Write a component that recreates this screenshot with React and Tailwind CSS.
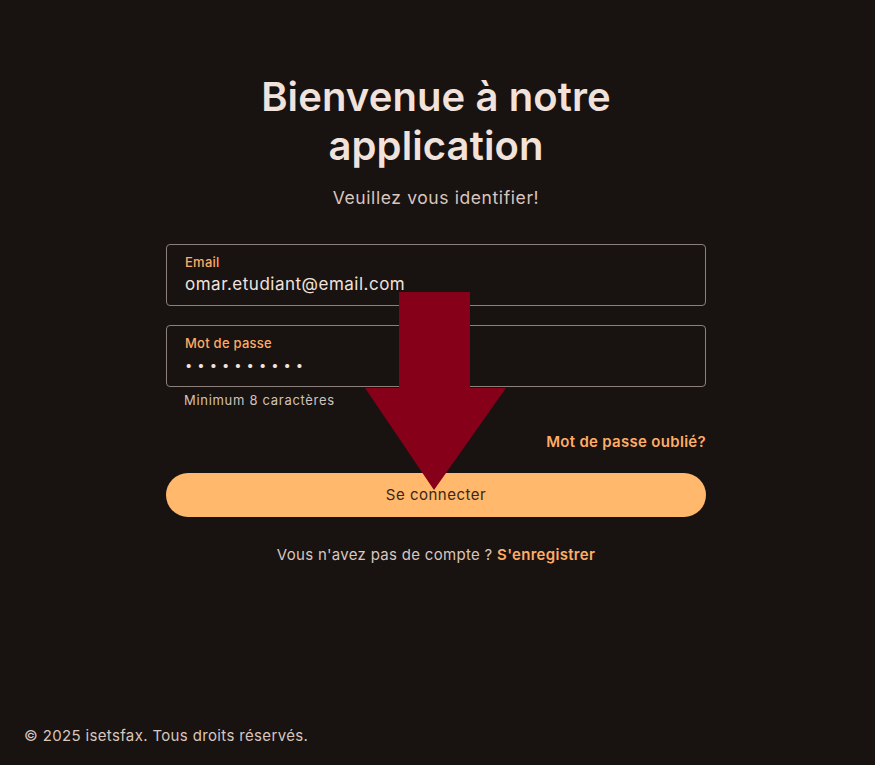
import React from "react";

function DownArrow() {
  return (
    <svg
      className="absolute left-[365px] top-[292px] pointer-events-none"
      width="141"
      height="198"
      viewBox="0 0 141 198"
    >
      <path d="M34 0 H105 V96 H141 L69 198 L0 96 H34 Z" fill="#850018" />
    </svg>
  );
}

function Field({ label, children }) {
  return (
    <div className="h-[62px] rounded-[4px] border border-[#8c807b] px-[18px] pt-[9px]">
      <p className="text-[13px] leading-[16px] font-medium tracking-[0.25px] text-[#ffac66]">{label}</p>
      {children}
    </div>
  );
}

export default function App() {
  return (
    <div className="relative min-h-[765px] bg-[#181210] font-['Inter',sans-serif] flex flex-col">
      <div className="flex-1 flex flex-col items-center pt-[72px] pr-[3px]">
        <h1 className="text-center text-[40px] leading-[49px] font-semibold tracking-[0.1px] text-[#f1e2dc]">
          Bienvenue à notre
          <br />
          application
        </h1>
        <p className="mt-[16px] text-[17.5px] leading-[24px] tracking-[0.6px] text-[#d8c6bf]">Veuillez vous identifier!</p>

        <form className="mt-[34px] w-[540px] flex flex-col">
          <Field label="Email">
            <p className="mt-[3px] text-[17px] leading-[22px] tracking-[0.5px] text-[#f1e2dc]">omar.etudiant@email.com</p>
          </Field>
          <div className="mt-[19px]">
            <Field label="Mot de passe">
              <p className="mt-[3px] text-[13px] leading-[22px] tracking-[5px] text-[#f1e2dc]">••••••••••</p>
            </Field>
          </div>
          <p className="mt-[5px] pl-[18px] text-[13px] leading-[16px] tracking-[0.7px] text-[#d2c2bb]">Minimum 8 caractères</p>
          <div className="mt-[24px] flex justify-end">
            <a className="text-[15px] leading-[20px] font-semibold tracking-[0.3px] text-[#ffac66]">Mot de passe oublié?</a>
          </div>
          <button
            type="button"
            className="mt-[21px] h-[44px] w-full rounded-full bg-[#ffb86c] text-[15px] tracking-[0.5px] text-[#3b2614]"
          >
            Se connecter
          </button>
          <p className="mt-[28px] text-center text-[15px] leading-[20px] tracking-[0.3px] text-[#d8c6bf]">
            Vous n'avez pas de compte ?{" "}
            <a className="font-semibold text-[#ffac66]">S'enregistrer</a>
          </p>
        </form>
      </div>
      <footer className="px-[24px] pb-[19px] text-[15px] leading-[20px] tracking-[0.35px] text-[#d8c6bf]">
        © 2025 isetsfax. Tous droits réservés.
      </footer>
      <DownArrow />
    </div>
  );
}
